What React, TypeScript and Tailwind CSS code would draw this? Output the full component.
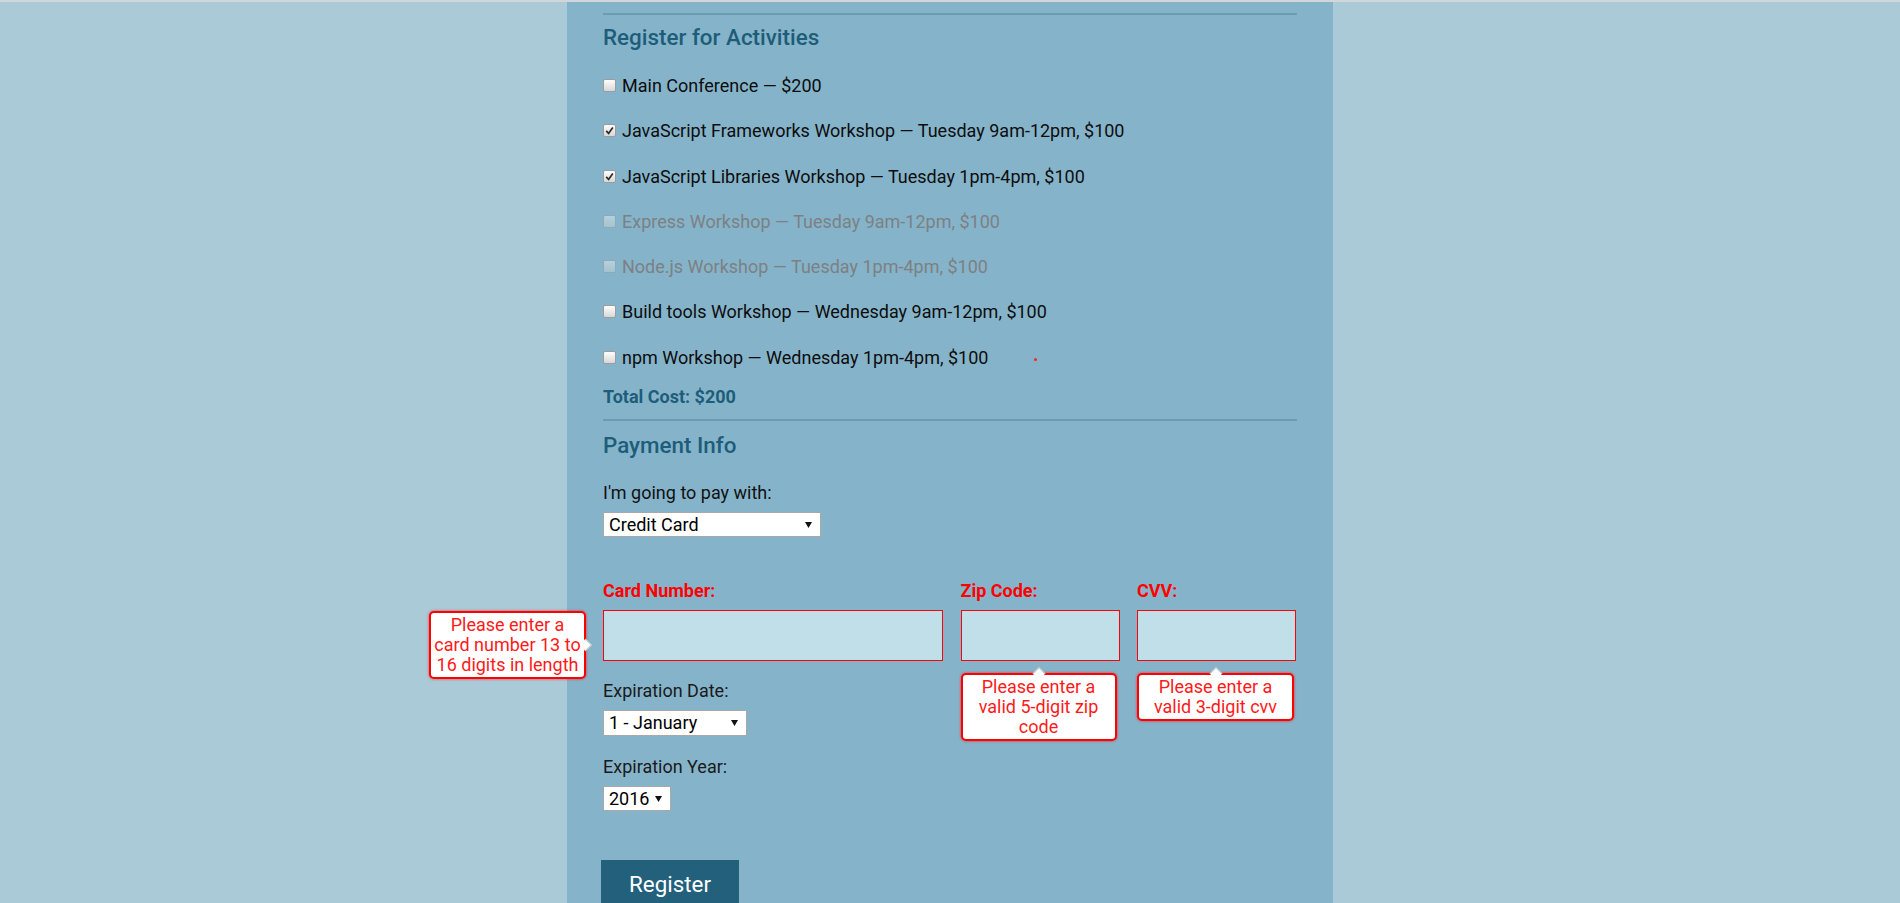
import React from "react";

type Activity = {
  label: string;
  checked?: boolean;
  disabled?: boolean;
  dot?: boolean;
};

const activities: Activity[] = [
  { label: "Main Conference — $200" },
  { label: "JavaScript Frameworks Workshop — Tuesday 9am-12pm, $100", checked: true },
  { label: "JavaScript Libraries Workshop — Tuesday 1pm-4pm, $100", checked: true },
  { label: "Express Workshop — Tuesday 9am-12pm, $100", disabled: true },
  { label: "Node.js Workshop — Tuesday 1pm-4pm, $100", disabled: true },
  { label: "Build tools Workshop — Wednesday 9am-12pm, $100" },
  { label: "npm Workshop — Wednesday 1pm-4pm, $100", dot: true },
];

function CheckBox({ checked, disabled }: { checked?: boolean; disabled?: boolean }) {
  return (
    <span
      className={
        "mt-[4px] inline-flex h-[13px] w-[13px] shrink-0 items-center justify-center rounded-[2px] border border-[#9c9c9c] bg-gradient-to-b from-[#fdfdfd] to-[#d8d8d8] " +
        (disabled ? "opacity-40" : "")
      }
    >
      {checked && (
        <svg width="9" height="9" viewBox="0 0 9 9">
          <path d="M1.2 4.8 L3.6 7.4 L7.8 1.4" fill="none" stroke="#2b2b2b" strokeWidth="1.7" />
        </svg>
      )}
    </span>
  );
}

function FakeSelect({ value, className }: { value: string; className: string }) {
  return (
    <div
      className={
        "flex items-center justify-between border border-[#a8a8a8] bg-white pl-[5px] pr-[8px] text-[18px] leading-none text-black " +
        className
      }
    >
      <span>{value}</span>
      <svg width="7" height="6" viewBox="0 0 7 6">
        <path d="M0 0 H7 L3.5 6 Z" fill="#111" />
      </svg>
    </div>
  );
}

function Bubble({ lines, className, arrow }: { lines: string[]; className: string; arrow: "up" | "right" }) {
  return (
    <div
      className={
        "absolute rounded-[5px] border-2 border-[#ff0000] bg-white px-[2px] py-[2px] text-center text-[18px] leading-[20px] text-[#ff1a1a] shadow-[0_0_3px_rgba(255,0,0,0.7)] " +
        className
      }
    >
      {arrow === "up" ? (
        <span className="absolute left-1/2 top-[-6px] h-[9px] w-[9px] -translate-x-1/2 rotate-45 border-l border-t border-[#c9c9c9] bg-white" />
      ) : (
        <span className="absolute right-[-6px] top-1/2 h-[9px] w-[9px] -translate-y-1/2 rotate-45 border-r border-t border-[#c9c9c9] bg-white" />
      )}
      {lines.map((l) => (
        <div key={l} className="relative whitespace-nowrap">
          {l}
        </div>
      ))}
    </div>
  );
}

export default function App() {
  return (
    <div className="min-h-screen bg-[#aacad7] font-['Roboto',sans-serif]">
      <div className="h-[2px] bg-[#d3d6d8]" />
      <div className="flex justify-center">
        <form className="flex min-h-[901px] w-[766px] flex-col bg-[#85b4ca] pb-[40px] pl-[36px] pr-[36px]">
          <div className="mt-[11px] h-[2px] bg-[#6a9db4]" />
          <h2 className="mt-[9px] text-[22.4px] font-medium leading-[26px] text-[#1e5d79]">Register for Activities</h2>

          <div className="mt-[25px] flex flex-col gap-[23.3px]">
            {activities.map((a) => (
              <label key={a.label} className="flex h-[22px] items-start gap-[6px] text-[18px] leading-[22px]">
                <CheckBox checked={a.checked} disabled={a.disabled} />
                <span className={a.disabled ? "text-[#7d8083]" : "text-[#0d0d0d]"}>{a.label}</span>
                {a.dot && <span className="ml-[40px] mt-[11px] h-[3px] w-[3px] rounded-full bg-[#ff2020]" />}
              </label>
            ))}
          </div>

          <p className="mt-[17.4px] text-[18px] font-bold leading-[22px] text-[#1e5d79]">Total Cost: $200</p>

          <div className="mt-[11px] h-[2px] bg-[#6a9db4]" />
          <h2 className="mt-[11px] text-[22.4px] font-medium leading-[26px] text-[#1e5d79]">Payment Info</h2>

          <p className="mt-[24px] text-[18px] leading-[22px] text-[#111]">I'm going to pay with:</p>
          <FakeSelect value="Credit Card" className="mt-[8px] h-[25px] w-[218px]" />

          <div className="mt-[43px] grid grid-cols-[340px_159px_159px] gap-x-[17.5px]">
            <div className="flex flex-col gap-[8px]">
              <span className="text-[18px] font-bold leading-[22px] text-[#ff0000]">Card Number:</span>
              <div className="relative">
                <div className="h-[51px] border border-[#ff0000] bg-[#c1dfe9]" />
                <Bubble
                  arrow="right"
                  lines={["Please enter a", "card number 13 to", "16 digits in length"]}
                  className="right-[calc(100%+17px)] top-[1px] w-[157px]"
                />
              </div>
            </div>
            <div className="flex flex-col gap-[8px]">
              <span className="text-[18px] font-bold leading-[22px] text-[#ff0000]">Zip Code:</span>
              <div className="relative">
                <div className="h-[51px] border border-[#ff0000] bg-[#c1dfe9]" />
                <Bubble
                  arrow="up"
                  lines={["Please enter a", "valid 5-digit zip", "code"]}
                  className="left-0 top-[63px] w-[156px]"
                />
              </div>
            </div>
            <div className="flex flex-col gap-[8px]">
              <span className="text-[18px] font-bold leading-[22px] text-[#ff0000]">CVV:</span>
              <div className="relative">
                <div className="h-[51px] border border-[#ff0000] bg-[#c1dfe9]" />
                <Bubble
                  arrow="up"
                  lines={["Please enter a", "valid 3-digit cvv"]}
                  className="left-0 top-[63px] w-[157px]"
                />
              </div>
            </div>
          </div>

          <p className="mt-[19.3px] text-[18px] leading-[22px] text-[#1a1a1a]">Expiration Date:</p>
          <FakeSelect value="1 - January" className="mt-[8px] h-[26px] w-[144px]" />

          <p className="mt-[20px] text-[18px] leading-[22px] text-[#1a1a1a]">Expiration Year:</p>
          <FakeSelect value="2016" className="mt-[8px] h-[25px] w-[68px]" />

          <div className="mt-[48.5px]">
            <button
              type="button"
              className="ml-[-2px] w-[138px] bg-[#22607c] pb-[12px] pt-[11px] text-[22.4px] leading-[27px] text-white"
            >
              Register
            </button>
          </div>
        </form>
      </div>
    </div>
  );
}
